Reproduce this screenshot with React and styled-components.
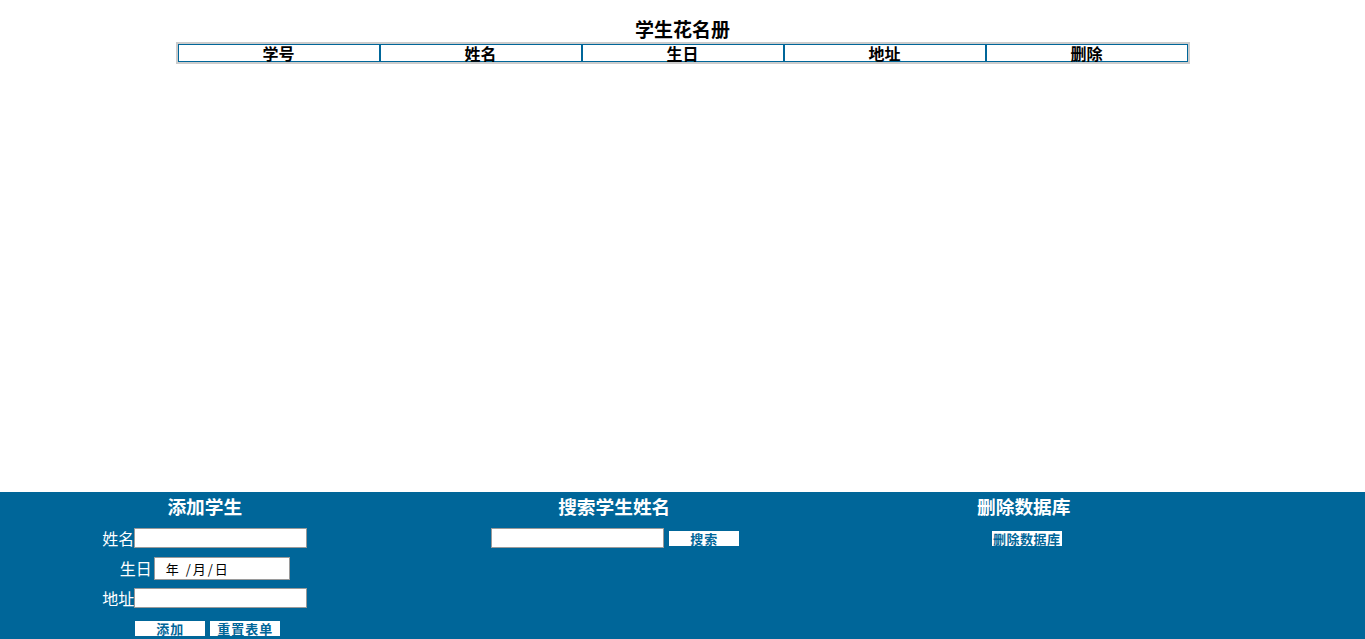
import React from "react";
import styled, { createGlobalStyle } from "styled-components";

const GlobalStyle = createGlobalStyle`
  html, body { margin: 0; padding: 0; background: #fff; }
  body { font-family: "Noto Sans CJK SC", "Noto Sans", sans-serif; }
  #root { min-height: 100vh; }
`;

const Page = styled.div`
  min-height: 100vh;
  display: flex;
  flex-direction: column;
`;

const Main = styled.main`
  padding: 15px 8px 0;
`;

const Title = styled.h3`
  margin: 0;
  text-align: center;
  font-size: 19px;
  font-weight: bold;
  line-height: 27px;
  color: #000;
`;

const Table = styled.table`
  width: 1014px;
  margin: 0 auto;
  border: 2px solid #ccc;
  border-spacing: 0;
  box-sizing: border-box;
`;

const Th = styled.th`
  border: 1px solid #006699;
  padding: 0;
  height: 16px;
  line-height: 16px;
  font-size: 16px;
  font-weight: bold;
  color: #000;
  text-align: center;
  width: 20%;
`;

const Footer = styled.footer`
  margin-top: auto;
  height: 147px;
  background: #006699;
  display: flex;
  padding-top: 2px;
  box-sizing: border-box;
  overflow: hidden;
`;

const Column = styled.section`
  width: 30%;
  text-align: center;
  color: #fff;
`;

const Heading = styled.h3`
  margin: 0 0 5px;
  font-size: 18.7px;
  font-weight: bold;
  line-height: 24px;
  color: #fff;
`;

const Row = styled.div`
  height: 30px;
  display: flex;
  align-items: center;
  justify-content: center;
  gap: ${(p) => p.$gap || 0}px;
  padding-left: ${(p) => p.$shift || 0}px;
`;

const Label = styled.label`
  font-size: 16px;
  line-height: 20px;
  color: #fff;
  margin-right: ${(p) => p.$space || 0}px;
`;

const TextInput = styled.input`
  width: 173px;
  height: 20px;
  box-sizing: border-box;
  border: 1px solid #9a9a9a;
  background: #fff;
  padding: 1px 2px;
  font-size: 13px;
  outline: none;
`;

const DateBox = styled.span`
  display: inline-flex;
  align-items: center;
  width: 136px;
  height: 23px;
  box-sizing: border-box;
  border: 1px solid #9a9a9a;
  background: #fff;
  padding-left: 11px;
  font-size: 13px;
  letter-spacing: 2px;
  color: #000;
  white-space: pre;
`;

const Button = styled.button`
  width: 70px;
  height: 15px;
  padding: 0;
  border: none;
  background: #fff;
  color: #006699;
  font-family: "Noto Sans CJK SC", sans-serif;
  font-size: 13px;
  font-weight: bold;
  line-height: 15px;
  letter-spacing: ${(p) => (p.$tight ? 0.5 : 1)}px;
  white-space: nowrap;
  cursor: pointer;
`;

const headers = ["学号", "姓名", "生日", "地址", "删除"];

export default function App() {
  return (
    <>
      <GlobalStyle />
      <Page>
        <Main>
          <Title>学生花名册</Title>
          <Table>
            <thead>
              <tr>
                {headers.map((h) => (
                  <Th key={h}>{h}</Th>
                ))}
              </tr>
            </thead>
          </Table>
        </Main>
        <Footer>
          <Column>
            <Heading>添加学生</Heading>
            <Row>
              <Label>姓名</Label>
              <TextInput type="text" />
            </Row>
            <Row>
              <Label $space={2}>生日</Label>
              <DateBox>年 /月/日</DateBox>
            </Row>
            <Row>
              <Label>地址</Label>
              <TextInput type="text" />
            </Row>
            <Row $gap={5} $shift={6}>
              <Button>添加</Button>
              <Button>重置表单</Button>
            </Row>
          </Column>
          <Column>
            <Heading>搜索学生姓名</Heading>
            <Row $gap={5} $shift={2}>
              <TextInput type="text" />
              <Button>搜索</Button>
            </Row>
          </Column>
          <Column>
            <Heading>删除数据库</Heading>
            <Row $shift={6}>
              <Button $tight>删除数据库</Button>
            </Row>
          </Column>
        </Footer>
      </Page>
    </>
  );
}
